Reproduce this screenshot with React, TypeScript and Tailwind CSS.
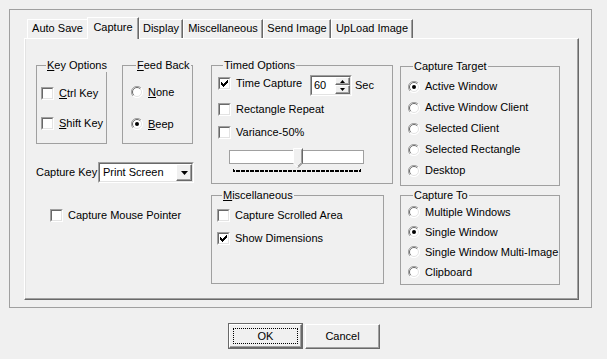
import React from 'react';

const U = ({ children }: { children: React.ReactNode }) => <span className="underline">{children}</span>;

const CheckBox = ({ checked }: { checked?: boolean }) => (
  <span className="block w-[13px] h-[13px] shrink-0 border border-t-[#a0a0a0] border-l-[#a0a0a0] border-r-white border-b-white">
    <span className="block w-full h-full bg-white border border-t-[#696969] border-l-[#696969] border-r-[#e3e3e3] border-b-[#e3e3e3]">
      {checked && (
        <svg width="9" height="9" viewBox="0 0 9 9" className="block">
          {[2, 3, 4, 3, 2, 1, 0].map((y, i) => (
            <rect key={i} x={i + 1} y={y + 1} width="1" height="3" fill="#000" />
          ))}
        </svg>
      )}
    </span>
  </span>
);

const Radio = ({ checked }: { checked?: boolean }) => (
  <svg width="12" height="12" viewBox="0 0 12 12" className="block shrink-0">
    <circle cx="6" cy="6" r="5.5" fill="#fff" />
    <path d="M10 2 A5.6 5.6 0 0 0 2 10" stroke="#a0a0a0" fill="none" />
    <path d="M2 10 A5.6 5.6 0 0 0 10 2" stroke="#ffffff" fill="none" />
    <path d="M9.2 2.8 A4.5 4.5 0 0 0 2.8 9.2" stroke="#696969" fill="none" />
    <path d="M2.8 9.2 A4.5 4.5 0 0 0 9.2 2.8" stroke="#e3e3e3" fill="none" />
    {checked && <circle cx="6" cy="6" r="2" fill="#000" />}
  </svg>
);

const CheckRow = ({ checked, label, className = '' }: { checked?: boolean; label: React.ReactNode; className?: string }) => (
  <div className={`flex items-center h-[13px] gap-[5px] ${className}`}>
    <CheckBox checked={checked} />
    <span className="whitespace-nowrap">{label}</span>
  </div>
);

const RadioRow = ({ checked, label, className = '' }: { checked?: boolean; label: React.ReactNode; className?: string }) => (
  <div className={`flex items-center gap-[5px] ${className}`}>
    <Radio checked={checked} />
    <span className="whitespace-nowrap">{label}</span>
  </div>
);

const Group = ({ title, className, children }: { title: React.ReactNode; className: string; children?: React.ReactNode }) => (
  <fieldset className={`border border-[#a0a0a0] min-w-0 ${className}`}>
    <legend className="ml-[5px] px-[1px] leading-[13px] whitespace-nowrap">{title}</legend>
    {children}
  </fieldset>
);

const Tab = ({ w, children }: { w: string; children: React.ReactNode }) => (
  <div className={`${w} h-[19px] flex justify-center pt-[2px] border border-b-0 border-white border-r-[#696969] shadow-[inset_-1px_0_0_#a0a0a0] whitespace-nowrap`}>
    {children}
  </div>
);

const raised = 'border border-t-white border-l-white border-r-[#696969] border-b-[#696969] shadow-[inset_-1px_-1px_0_#a0a0a0]';
const sunken = 'border border-t-[#a0a0a0] border-l-[#a0a0a0] border-r-white border-b-white';
const sunkenIn = 'border border-t-[#696969] border-l-[#696969] border-r-[#e3e3e3] border-b-[#e3e3e3]';

export default function App() {
  const ticks = Array.from({ length: 101 }, (_, i) => Math.round((i * 127) / 100));

  return (
    <div className="w-[607px] h-[359px] bg-[#f0f0f0] text-[11px] leading-[13px] text-black font-['Liberation_Sans',Arial,sans-serif] flex flex-col select-none">
      <div className="ml-[9px] mt-[9px] w-[583px] h-[299px] border border-[#a0a0a0] pt-[7px] pl-[14px]">
        {/* tabs */}
        <div className="flex items-end h-[21px] pl-[3px]">
          <div className="w-[60px] h-[19px] flex justify-center pt-[2px] border-t border-l border-white">Auto Save</div>
          <div className="relative z-10 -mb-[1px] w-[52px] h-[22px] flex justify-center pt-[3px] bg-[#f0f0f0] border border-b-0 border-white border-r-[#696969] shadow-[inset_-1px_0_0_#a0a0a0]">
            Capture
          </div>
          <Tab w="w-[44px]">Display</Tab>
          <Tab w="w-[80px]">Miscellaneous</Tab>
          <Tab w="w-[68px]">Send Image</Tab>
          <Tab w="w-[82px]">UpLoad Image</Tab>
        </div>

        {/* panel */}
        <div className="w-[555px] h-[262px] flex pl-[11px] pt-[20px] border border-white border-r-[#696969] border-b-[#696969] shadow-[inset_-1px_-1px_0_#a0a0a0,inset_1px_0_0_#e3e3e3]">
          {/* column 1 */}
          <div className="w-[175px] flex flex-col">
            <div className="flex gap-[15px]">
              <Group title={<><U>K</U>ey Options</>} className="w-[71px] h-[85px] pt-[15px] pl-[4px]">
                <div className="flex flex-col gap-[17px]">
                  <CheckRow label={<><U>C</U>trl Key</>} />
                  <CheckRow label={<><U>S</U>hift Key</>} />
                </div>
              </Group>
              <Group title={<><U>F</U>eed Back</>} className="w-[71px] h-[85px] pt-[14px] pl-[8px]">
                <div className="flex flex-col gap-[20px]">
                  <RadioRow className="h-[12px]" label={<><U>N</U>one</>} />
                  <RadioRow className="h-[12px]" checked label={<><U>B</U>eep</>} />
                </div>
              </Group>
            </div>

            <div className="flex items-center mt-[18px]">
              <span className="w-[62px] whitespace-nowrap">Capture Key</span>
              <div className={`w-[96px] h-[21px] ${sunken}`}>
                <div className={`w-full h-full bg-white flex items-center pl-[3px] ${sunkenIn}`}>
                  <span className="flex-1">Print Screen</span>
                  <div className={`w-[16px] h-[17px] bg-[#f0f0f0] flex items-center justify-center ${raised}`}>
                    <svg width="7" height="4" viewBox="0 0 7 4">
                      <path d="M0 0h7L3.5 4z" fill="#000" />
                    </svg>
                  </div>
                </div>
              </div>
            </div>

            <CheckRow className="mt-[26px] ml-[14px]" label="Capture Mouse Pointer" />
          </div>

          {/* column 2 */}
          <div className="w-[189px] flex flex-col">
            <Group title="Timed Options" className="w-[182px] h-[125px] pt-[3px] pl-[6px]">
              <div className="flex items-start h-[21px]">
                <CheckRow className="w-[92px] mt-[2px]" checked label="Time Capture" />
                <div className={`w-[42px] h-[21px] ${sunken}`}>
                  <div className={`w-full h-full bg-white flex items-center pl-[2px] ${sunkenIn}`}>
                    <span className="flex-1">60</span>
                    <div className="flex flex-col w-[15px] h-full">
                      <div className={`h-[8px] bg-[#f0f0f0] flex items-center justify-center ${raised}`}>
                        <svg width="5" height="3" viewBox="0 0 5 3">
                          <path d="M2.5 0L5 3H0z" fill="#000" />
                        </svg>
                      </div>
                      <div className={`flex-1 bg-[#f0f0f0] flex items-center justify-center ${raised}`}>
                        <svg width="5" height="3" viewBox="0 0 5 3">
                          <path d="M0 0h5L2.5 3z" fill="#000" />
                        </svg>
                      </div>
                    </div>
                  </div>
                </div>
                <span className="ml-[3px] mt-[4px]">Sec</span>
              </div>
              <CheckRow className="mt-[7px]" label="Rectangle Repeat" />
              <CheckRow className="mt-[10px]" label="Variance-50%" />
              <div className="relative mt-[11px] ml-[11px] w-[135px]">
                <div className="w-[135px] h-[14px] bg-white border border-[#a0a0a0]" />
                <svg width="130" height="4" viewBox="0 0 130 4" className="block mt-[5px] ml-[4px]">
                  {ticks.map((x, i) => (
                    <rect key={i} x={x} y={i === 0 || i === 100 ? 0 : 1} width="1" height={i === 0 || i === 100 ? 3 : 2} fill="#000" />
                  ))}
                </svg>
                <svg width="10" height="20" viewBox="0 0 10 20" className="absolute left-[64px] top-[-2px]">
                  <path d="M0.5 0.5H9.5V15L5 19.5L0.5 15Z" fill="#f0f0f0" />
                  <path d="M0.5 15V0.5H9" stroke="#fff" fill="none" />
                  <path d="M9.5 0.5V15L5 19.5" stroke="#696969" fill="none" />
                  <path d="M8.5 1.5V14.6L5 18" stroke="#a0a0a0" fill="none" />
                  <path d="M0.5 15L4.5 19" stroke="#fff" fill="none" />
                </svg>
              </div>
            </Group>

            <Group title={<><U>M</U>iscellaneous</>} className="mt-[5px] w-[173px] h-[95px] pt-[7px] pl-[5px]">
              <div className="flex flex-col gap-[10px]">
                <CheckRow label="Capture Scrolled Area" />
                <CheckRow checked label="Show Dimensions" />
              </div>
            </Group>
          </div>

          {/* column 3 */}
          <div className="w-[160px] flex flex-col mt-[1px]">
            <Group title="Capture Target" className="w-[160px] h-[126px] pt-[3px] pl-[7px]">
              <RadioRow className="h-[21px]" checked label="Active Window" />
              <RadioRow className="h-[21px]" label="Active Window Client" />
              <RadioRow className="h-[21px]" label="Selected Client" />
              <RadioRow className="h-[21px]" label="Selected Rectangle" />
              <RadioRow className="h-[21px]" label="Desktop" />
            </Group>
            <Group title="Capture To" className="mt-[3px] w-[160px] h-[96px] pl-[7px]">
              <RadioRow className="h-[20px]" label="Multiple Windows" />
              <RadioRow className="h-[20px]" checked label="Single Window" />
              <RadioRow className="h-[20px]" label="Single Window Multi-Image" />
              <RadioRow className="h-[20px]" label="Clipboard" />
            </Group>
          </div>
        </div>
      </div>

      {/* buttons */}
      <div className="flex items-center gap-[2px] pl-[228px] mt-[15px] h-[26px]">
        <div className="w-[75px] h-[26px] border border-[#696969]">
          <div className={`w-full h-full p-[3px] ${raised}`}>
            <div className="w-full h-full border border-dotted border-black flex items-center justify-center">OK</div>
          </div>
        </div>
        <div className={`w-[75px] h-[25px] flex items-center justify-center ${raised}`}>Cancel</div>
      </div>
    </div>
  );
}
